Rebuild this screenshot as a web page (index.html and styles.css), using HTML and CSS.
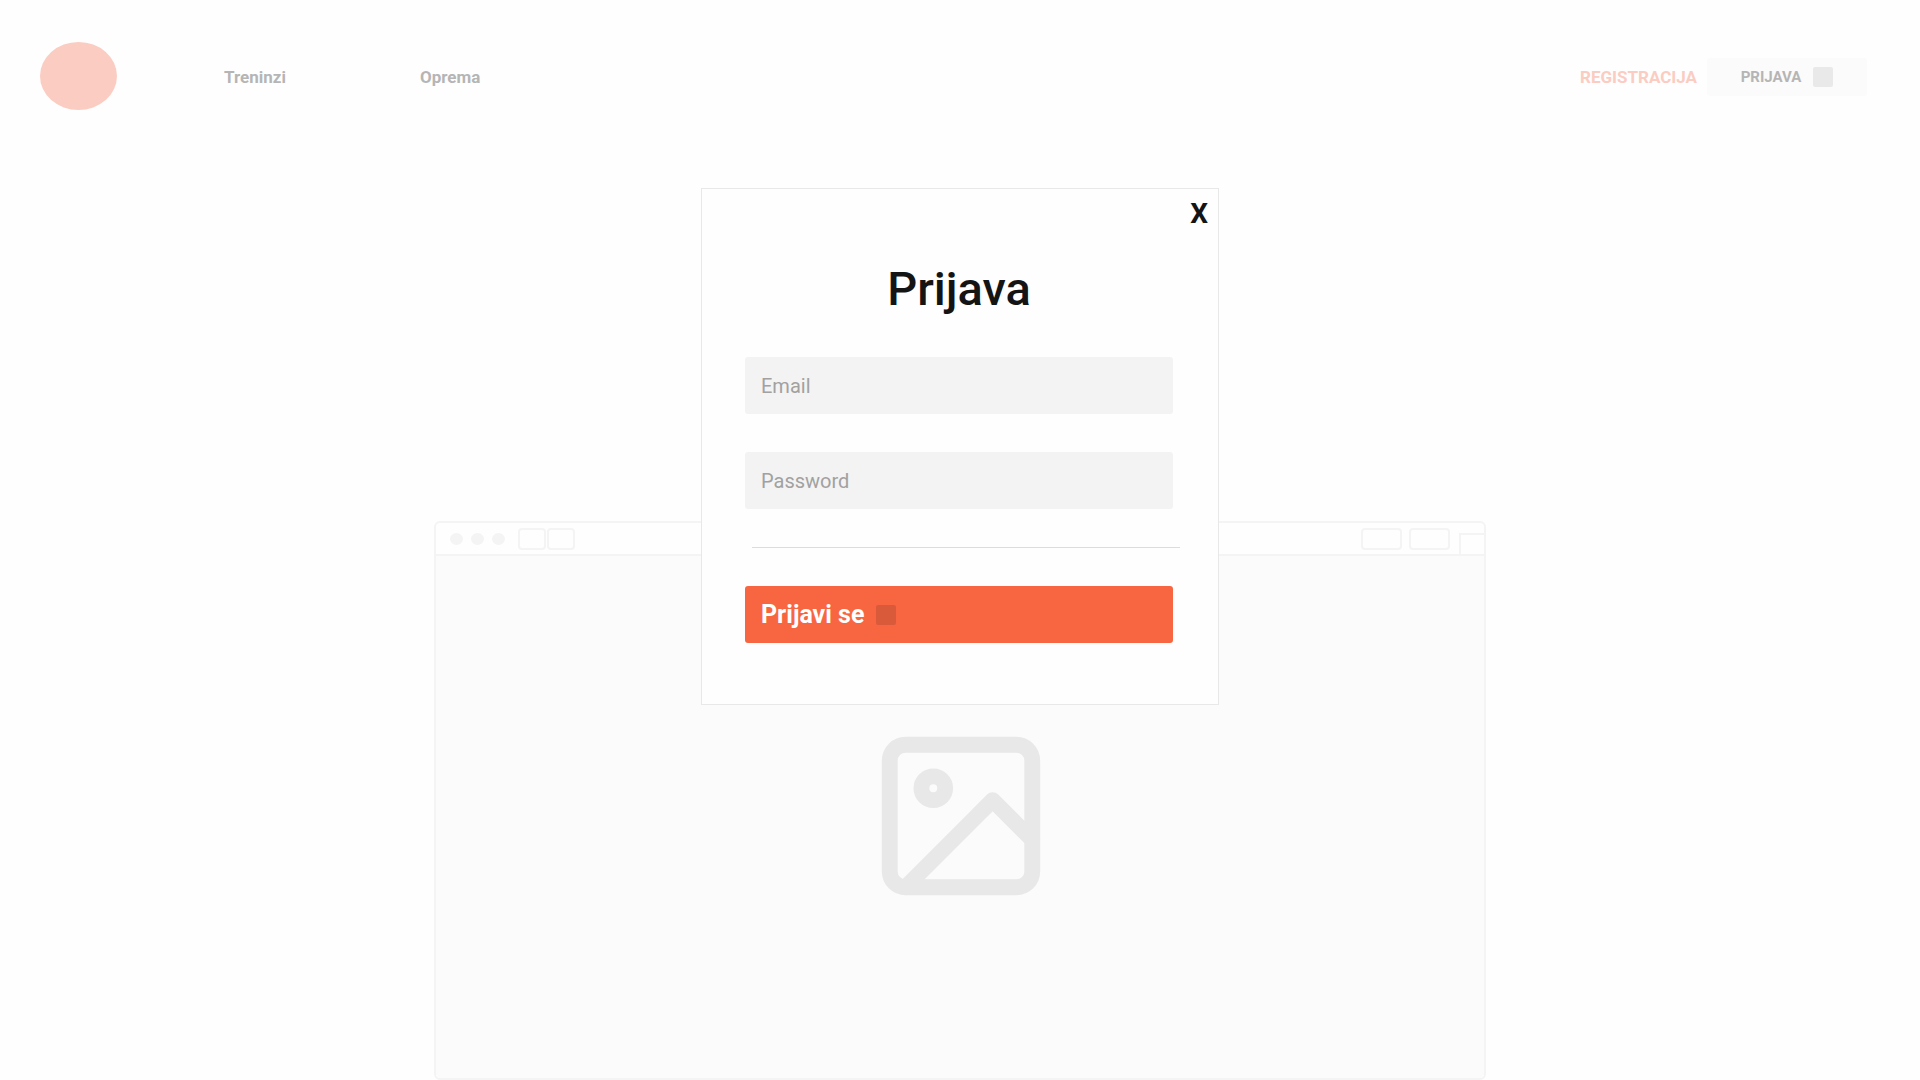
FILE: index.html
```html
<!DOCTYPE html>
<html lang="hr">
<head>
<meta charset="utf-8">
<meta name="viewport" content="width=device-width, initial-scale=1">
<title>Prijava</title>
<link rel="stylesheet" href="styles.css">
</head>
<body>
<header class="header">
  <a class="logo" href="#" aria-label="Početna"></a>
  <nav class="nav">
    <a href="#">Treninzi</a>
    <a href="#">Oprema</a>
  </nav>
  <div class="account">
    <a class="register" href="#">REGISTRACIJA</a>
    <button class="login" type="button">PRIJAVA<span class="square"></span></button>
  </div>
</header>
<main class="main">
  <section class="browser">
    <div class="toolbar">
      <span class="dots"><i></i><i></i><i></i></span>
      <span class="tabs"><i></i><i></i></span>
      <span class="tools"><i></i><i></i></span>
      <span class="corner"></span>
    </div>
    <div class="canvas">
      <svg class="picture" viewBox="0 0 24 24" fill="none" stroke="currentColor" stroke-width="2" stroke-linecap="round" stroke-linejoin="round" aria-hidden="true">
        <rect x="3" y="3" width="18" height="18" rx="2"/>
        <circle cx="8.5" cy="8.5" r="1.5"/>
        <path d="M21 15l-5-5L5 21"/>
      </svg>
    </div>
  </section>
</main>
<div class="overlay">
  <div class="modal" role="dialog" aria-labelledby="modal-title">
    <button class="close" type="button">X</button>
    <h1 class="title" id="modal-title">Prijava</h1>
    <form class="form">
      <input class="field" type="email" placeholder="Email" aria-label="Email">
      <input class="field" type="password" placeholder="Password" aria-label="Password">
      <hr class="divider">
      <button class="submit" type="submit">Prijavi se<span class="square"></span></button>
    </form>
  </div>
</div>
</body>
</html>
```
FILE: styles.css
```css
* {
  box-sizing: border-box;
}

body {
  margin: 0;
  min-height: 100vh;
  display: flex;
  flex-direction: column;
  position: relative;
  background: #fefefe;
  color: #141414;
  font-family: Roboto, "Liberation Sans", sans-serif;
}

a {
  color: inherit;
  text-decoration: none;
}

button,
input {
  border: 0;
  font-family: inherit;
}

/* Header */
.header {
  display: flex;
  align-items: center;
  padding: 42px 53px 0 40px;
  color: #b5b5b5;
  font-size: 17px;
  font-weight: 700;
}

.logo {
  width: 77px;
  height: 68px;
  border-radius: 50%;
  background: #fbccc1;
}

.nav {
  display: flex;
  gap: 134px;
  margin-left: 107px;
  padding-top: 2px;
}

.account {
  display: flex;
  align-items: center;
  gap: 10px;
  margin-left: auto;
  padding-top: 2px;
}

.register {
  color: #fbccc1;
}

.login {
  display: flex;
  align-items: center;
  justify-content: center;
  gap: 12px;
  width: 160px;
  height: 38px;
  padding: 0;
  border-radius: 3px;
  background: #fbfbfb;
  color: #b5b5b5;
  font-size: 15px;
  font-weight: 700;
}

.square {
  width: 20px;
  height: 20px;
  border-radius: 2px;
  background: rgba(20, 20, 20, 0.08);
}

/* Browser mock-up behind the dialog */
.main {
  flex: 1;
  display: flex;
  justify-content: center;
  padding-top: 411px;
}

.browser {
  display: flex;
  flex-direction: column;
  width: 54.8%;
  border: 2px solid #f4f4f4;
  border-radius: 6px;
  overflow: hidden;
}

.toolbar {
  display: flex;
  align-items: center;
  height: 33px;
  padding-left: 14px;
  border-bottom: 2px solid #f4f4f4;
}

.dots {
  display: flex;
  gap: 8px;
}

.dots i {
  width: 13px;
  height: 12px;
  border-radius: 50%;
  background: #f4f4f4;
}

.tabs {
  display: flex;
  gap: 1px;
  margin-left: 13px;
}

.tabs i,
.tools i {
  width: 28px;
  height: 22px;
  border: 2px solid #f4f4f4;
  border-radius: 4px;
}

.tools {
  display: flex;
  gap: 7px;
  margin-left: auto;
}

.tools i {
  width: 41px;
}

.corner {
  align-self: flex-end;
  width: 25px;
  height: 21px;
  margin-left: 9px;
  border-top: 2px solid #f4f4f4;
  border-left: 2px solid #f4f4f4;
}

.canvas {
  flex: 1;
  display: flex;
  align-items: center;
  justify-content: center;
  padding: 0 0 3px 2px;
  background: #fbfbfb;
}

.picture {
  width: 190px;
  height: 190px;
  color: #e8e8e8;
}

/* Login dialog */
.overlay {
  position: absolute;
  inset: 0;
  display: flex;
  align-items: flex-start;
  justify-content: center;
  padding-top: 188px;
}

.modal {
  display: flex;
  flex-direction: column;
  width: 518px;
  padding: 11px 45px 61px 43px;
  border: 1px solid #e8e8e8;
  background: #fefefe;
}

.close {
  align-self: flex-end;
  margin-right: -35px;
  padding: 0;
  background: none;
  color: #141414;
  font-size: 28px;
  font-weight: 700;
  line-height: 28px;
}

.title {
  margin: 32px 0 39px;
  font-size: 47px;
  font-weight: 500;
  line-height: 58px;
  text-align: center;
}

.form {
  display: flex;
  flex-direction: column;
  gap: 38px;
}

.field,
.submit {
  width: 100%;
  height: 57px;
  padding: 0 16px;
  border-radius: 3px;
}

.field {
  background: #f3f3f3;
  color: #141414;
  font-size: 20px;
}

.field::placeholder {
  color: #a1a1a1;
  opacity: 1;
}

.divider {
  align-self: stretch;
  margin: 0 -7px 0 7px;
  border: 0;
  border-top: 1px solid #dcdcdc;
}

.submit {
  display: flex;
  align-items: center;
  gap: 12px;
  background: #f86641;
  color: #fff;
  font-size: 25px;
  font-weight: 700;
}

.submit .square {
  background: rgba(20, 20, 20, 0.14);
}
```
